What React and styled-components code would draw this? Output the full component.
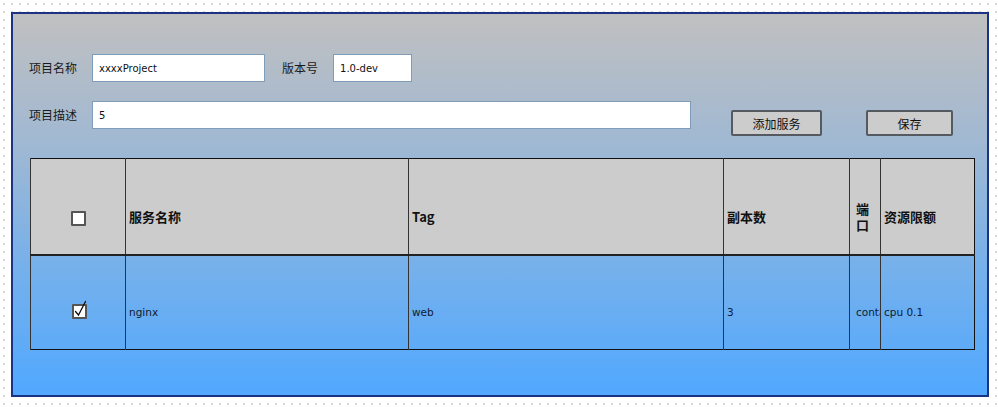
import React from 'react';
import styled, { createGlobalStyle } from 'styled-components';

const GlobalStyle = createGlobalStyle`
  html, body {
    margin: 0;
    padding: 0;
    background: #fff;
  }
  body {
    font-family: "Noto Sans CJK SC", "Liberation Sans", sans-serif;
    font-size: 12px;
    color: #111;
  }
`;

const Page = styled.div`
  width: 998px;
  height: 407px;
  box-sizing: border-box;
  padding: 12px 0 0 11px;
  background-color: #fff;
  background-image: radial-gradient(circle, #d6d6d6 0.9px, transparent 1px);
  background-size: 8px 8px;
  background-position: 0 0;
`;

const Frame = styled.div`
  width: 978px;
  height: 385px;
  box-sizing: border-box;
  border: 2px solid #1c3383;
  background: linear-gradient(to bottom, #c0c0c0 0%, #9fb8d3 35%, #74b0ec 68%, #51a8ff 100%);
  padding: 40px 0 0 16px;
  display: flex;
  flex-direction: column;
`;

const FormRow = styled.div`
  display: flex;
  align-items: ${(p) => (p.$top ? 'flex-start' : 'center')};
  height: 28px;
  margin-bottom: ${(p) => p.$gap || 0}px;
`;

const Label = styled.span`
  width: 63px;
  height: 28px;
  line-height: 28px;
  font-size: 12px;
  color: #1a1a1a;
  flex-shrink: 0;
`;

const Field = styled.div`
  width: ${(p) => p.$w}px;
  height: 28px;
  box-sizing: border-box;
  border: 1px solid #7f9db9;
  background: #fff;
  padding: 0 6px;
  line-height: 28px;
  font-family: "DejaVu Sans", "Liberation Sans", sans-serif;
  font-size: 10px;
  color: #111;
  margin-top: ${(p) => p.$dy || 0}px;
  margin-right: ${(p) => p.$after || 0}px;
`;

const InlineLabel = styled.span`
  font-size: 12px;
  line-height: 28px;
  margin-right: 15px;
  color: #1a1a1a;
`;

const Button = styled.div`
  width: ${(p) => p.$w}px;
  height: 26px;
  box-sizing: border-box;
  margin-top: 9px;
  margin-right: ${(p) => p.$after || 0}px;
  border: 2px solid #555a60;
  border-radius: 2px;
  background: #cccccc;
  display: flex;
  align-items: center;
  justify-content: center;
  font-size: 12px;
  color: #111;
`;

const Table = styled.table`
  margin-top: 29px;
  margin-left: 1px;
  width: 944px;
  border-collapse: collapse;
  table-layout: fixed;
  border: 1px solid #111;
`;

const HeadRow = styled.tr`
  height: 96px;
  background: #cccccc;
  border-bottom: 2px solid #222;
`;

const BodyRow = styled.tr`
  height: 95px;
`;

const Th = styled.th`
  text-align: ${(p) => (p.$center ? 'center' : 'left')};
  vertical-align: middle;
  padding: 22px ${(p) => p.$pad || 3}px 0;
  font-weight: bold;
  font-size: 13px;
  line-height: 16px;
  color: #111;
  border-left: 1px solid #333;
  overflow: hidden;
  word-break: break-all;
`;

const Td = styled.td`
  text-align: ${(p) => (p.$center ? 'center' : 'left')};
  vertical-align: middle;
  padding: 19px 0 0 ${(p) => p.$pad || 3}px;
  font-family: "DejaVu Sans", "Liberation Sans", sans-serif;
  font-size: 10.5px;
  color: #111a30;
  border-left: 1px solid #333;
  white-space: nowrap;
  overflow: hidden;
  text-overflow: clip;
`;

const Box = styled.span`
  display: inline-block;
  position: relative;
  width: 11px;
  height: 11px;
  border: 2px solid #555;
  border-radius: 1px;
  background: #fff;
  vertical-align: middle;
  svg {
    position: absolute;
    left: 0;
    top: -6px;
  }
`;

function Checkbox({ checked }) {
  return (
    <Box>
      {checked && (
        <svg width="16" height="18" viewBox="0 0 16 18">
          <path d="M1.5 11.5 L4.5 15 L11.5 1.5" fill="none" stroke="#111" strokeWidth="1.3" strokeLinecap="round" />
        </svg>
      )}
    </Box>
  );
}

const columns = [
  { key: 'check', w: 95 },
  { key: 'name', w: 283, title: '服务名称' },
  { key: 'tag', w: 315, title: 'Tag' },
  { key: 'replicas', w: 126, title: '副本数' },
  { key: 'port', w: 31, title: '端口', pad: 6 },
  { key: 'limit', w: 94, title: '资源限额' },
];

const rows = [{ id: 1, checked: true, name: 'nginx', tag: 'web', replicas: '3', port: 'container', limit: 'cpu 0.1' }];

export default function App() {
  return (
    <>
      <GlobalStyle />
      <Page>
        <Frame>
          <FormRow $gap={19}>
            <Label>项目名称</Label>
            <Field $w={173} $after={17}>xxxxProject</Field>
            <InlineLabel>版本号</InlineLabel>
            <Field $w={79} $dy={-1}>1.0-dev</Field>
          </FormRow>
          <FormRow $top>
            <Label>项目描述</Label>
            <Field $w={599} $after={40}>5</Field>
            <Button $w={91} $after={44}>添加服务</Button>
            <Button $w={87}>保存</Button>
          </FormRow>
          <Table>
            <colgroup>
              {columns.map((c) => (
                <col key={c.key} style={{ width: c.w }} />
              ))}
            </colgroup>
            <thead>
              <HeadRow>
                <Th $center><Checkbox /></Th>
                {columns.slice(1).map((c) => (
                  <Th key={c.key} $pad={c.pad}>{c.title}</Th>
                ))}
              </HeadRow>
            </thead>
            <tbody>
              {rows.map((r) => (
                <BodyRow key={r.id}>
                  <Td $center><Checkbox checked={r.checked} /></Td>
                  <Td>{r.name}</Td>
                  <Td>{r.tag}</Td>
                  <Td>{r.replicas}</Td>
                  <Td $pad={6}>{r.port}</Td>
                  <Td>{r.limit}</Td>
                </BodyRow>
              ))}
            </tbody>
          </Table>
        </Frame>
      </Page>
    </>
  );
}
